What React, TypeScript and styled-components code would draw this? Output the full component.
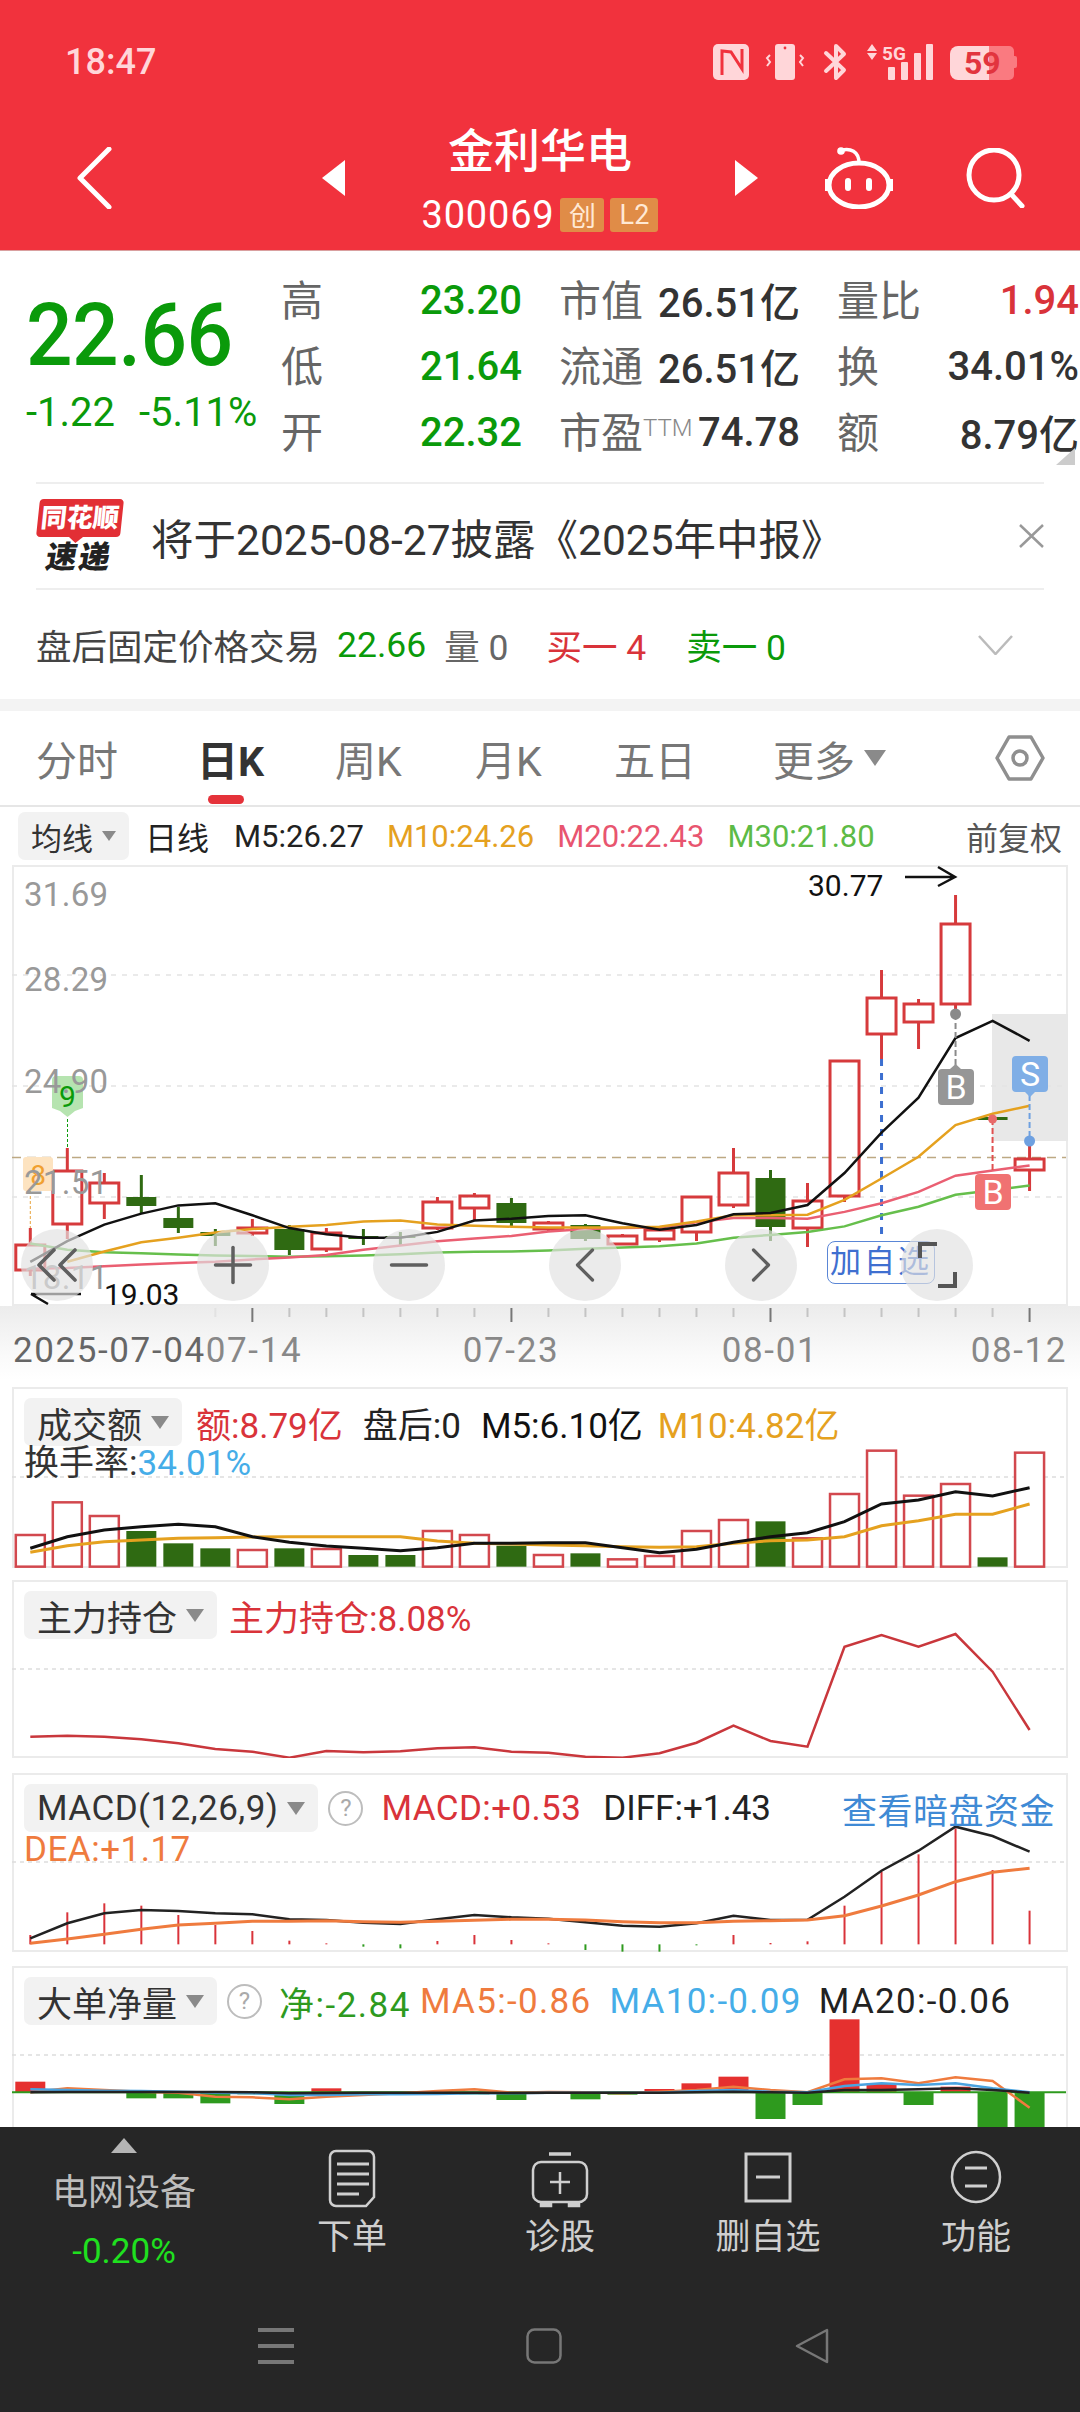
import styled, { createGlobalStyle } from "styled-components";
import { ChevronLeft, ChevronRight, ChevronsLeft, Minus, Plus } from "lucide-react";

const DARK_GREEN = "#2f6a12";

const GlobalStyle = createGlobalStyle`
  html, body {
    margin: 0;
    padding: 0;
    background: #fff;
  }
  body {
    font-family: Roboto, "Noto Sans CJK SC", sans-serif;
    color: #333;
  }
  * {
    box-sizing: border-box;
  }
`;

const Page = styled.div`
  position: relative;
  width: 1080px;
  height: 2412px;
  overflow: hidden;
  background: #fff;
`;

/* ---------- red header ---------- */

const Header = styled.header`
  height: 251px;
  background: #f1323d;
  border-bottom: 1px solid #d9a0a0;
`;

const StatusBar = styled.div`
  height: 106px;
  padding: 44px 63px 0 65px;
  display: flex;
  justify-content: space-between;
  align-items: flex-start;
`;

const Clock = styled.div`
  font-size: 36px;
  line-height: 36px;
  font-weight: 500;
  color: #ffd6d9;
`;

const NavBar = styled.div`
  display: grid;
  grid-template-columns: 246px 23px 390px 23px 1fr;
  padding-left: 76px;
  align-items: center;
  height: 144px;
`;

const Arrow = styled.span<{ $dir: "left" | "right" }>`
  display: block;
  width: 0;
  height: 0;
  border-top: 18px solid transparent;
  border-bottom: 18px solid transparent;
  ${(p) =>
    p.$dir === "left"
      ? "border-right: 23px solid #fff;"
      : "border-left: 23px solid #fff;"}
`;

const TitleBlock = styled.div`
  display: flex;
  flex-direction: column;
  align-items: center;
  color: #fff;
`;

const StockName = styled.div`
  font-size: 46px;
  line-height: 58px;
  font-weight: 500;
`;

const StockCode = styled.div`
  display: flex;
  align-items: center;
  gap: 6px;
  height: 40px;
  margin-top: 15px;
  font-size: 38px;
  letter-spacing: 0.8px;
`;

const Badge = styled.span<{ $width: number }>`
  width: ${(p) => p.$width}px;
  height: 34px;
  display: flex;
  align-items: center;
  justify-content: center;
  background: #e08c47;
  border-radius: 3px;
  font-size: 27px;
  letter-spacing: 0;
  color: #ffe9d5;
`;

const NavIcons = styled.div`
  display: flex;
  justify-content: flex-end;
  align-items: center;
  gap: 71px;
  padding-right: 55px;
`;

/* ---------- quote ---------- */

const QuotePanel = styled.section`
  display: flex;
  height: 231px;
  padding-top: 13px;
  position: relative;
`;

const PriceBlock = styled.div`
  width: 281px;
  padding: 27px 0 0 26px;
`;

const Price = styled.div`
  font-size: 82px;
  line-height: 88px;
  font-weight: 500;
  letter-spacing: -0.5px;
  color: #0a9a0a;
  transform: scaleY(1.06);
`;

const PriceChange = styled.div`
  display: flex;
  gap: 24px;
  margin-top: 14px;
  font-size: 40px;
  line-height: 40px;
  white-space: nowrap;
  color: #0a9a0a;
`;

const StatGrid = styled.div`
  display: grid;
  grid-template-columns: 241px 241px 242px;
  grid-auto-rows: 66px;
  column-gap: 37px;
  width: 799px;
`;

const Stat = styled.div`
  display: flex;
  justify-content: space-between;
  align-items: center;
  font-size: 40px;
  white-space: nowrap;
`;

const StatLabel = styled.span`
  font-size: 42px;
  color: #666;
`;

const Ttm = styled.sup`
  font-size: 24px;
  line-height: 0;
  font-weight: 300;
  color: #888;
  vertical-align: 12px;
`;

const StatValue = styled.span<{ $color?: string }>`
  margin-top: 6px;
  color: ${(p) => p.$color || "#333"};
  font-weight: 500;
`;

const CornerMark = styled.span`
  position: absolute;
  right: 5px;
  bottom: 17px;
  width: 0;
  height: 0;
  border-left: 19px solid transparent;
  border-bottom: 17px solid #ccc;
`;

/* ---------- notice + after-hours ---------- */

const NewsBar = styled.div`
  display: flex;
  align-items: center;
  height: 108px;
  margin: 0 36px;
  border-top: 2px solid #eee;
  border-bottom: 2px solid #eee;
`;

const Logo = styled.div`
  width: 115px;
  display: flex;
  flex-direction: column;
  align-items: flex-start;
`;

const LogoBubble = styled.div`
  position: relative;
  width: 84px;
  height: 38px;
  margin-left: 2px;
  background: #e22f35;
  border-radius: 4px;
  transform: skewX(-6deg);
  color: #fff;
  font-size: 26px;
  font-weight: 900;
  line-height: 38px;
  text-align: center;
  white-space: nowrap;
  &::after {
    content: "";
    position: absolute;
    left: 33px;
    bottom: -6px;
    border-left: 7px solid transparent;
    border-right: 7px solid transparent;
    border-top: 6px solid #e22f35;
  }
`;

const LogoSub = styled.div`
  margin: 5px 0 0 10px;
  font-size: 31px;
  line-height: 32px;
  font-weight: 900;
  letter-spacing: 2px;
  color: #222;
  transform: skewX(-10deg);
`;

const NewsText = styled.div`
  flex: 1;
  font-size: 42.5px;
  color: #333;
  white-space: nowrap;
`;

const AfterHours = styled.div`
  display: flex;
  align-items: center;
  height: 109px;
  padding: 0 67px 0 36px;
  font-size: 35.5px;
  color: #444;
  white-space: nowrap;
`;

const AfterItem = styled.span<{ $color?: string; $gap: number }>`
  margin-left: ${(p) => p.$gap}px;
  color: ${(p) => p.$color || "#666"};
`;

const GapBand = styled.div`
  height: 12px;
  background: #f3f3f3;
`;

/* ---------- tabs ---------- */

const Tabs = styled.nav`
  display: grid;
  grid-template-columns: 161px 138px 140px 139px 159px 222px auto;
  align-items: center;
  height: 96px;
  padding-left: 36px;
  border-bottom: 2px solid #e6e6e6;
`;

const Tab = styled.div<{ $active?: boolean }>`
  position: relative;
  display: flex;
  align-items: center;
  gap: 9px;
  font-size: 41px;
  font-weight: ${(p) => (p.$active ? 700 : 400)};
  color: ${(p) => (p.$active ? "#333" : "#777")};
`;

const TabLine = styled.span`
  position: absolute;
  left: 11px;
  top: 67px;
  width: 36px;
  height: 9px;
  border-radius: 5px;
  background: #e5323a;
`;

const Caret = styled.span<{ $size?: number }>`
  display: inline-block;
  width: 0;
  height: 0;
  border-left: ${(p) => p.$size || 9}px solid transparent;
  border-right: ${(p) => p.$size || 9}px solid transparent;
  border-top: ${(p) => (p.$size || 9) * 1.5}px solid #8a8a8a;
`;

/* ---------- main chart ---------- */

const ChartToolbar = styled.div`
  display: flex;
  align-items: center;
  gap: 23px;
  height: 58px;
  padding: 0 18px;
  font-size: 31px;
  white-space: nowrap;
`;

const Pill = styled.div<{ $size?: number; $spacing?: number }>`
  display: flex;
  align-items: center;
  gap: 9px;
  height: 48px;
  padding: 0 13px;
  background: #f2f2f2;
  border-radius: 7px;
  font-size: ${(p) => p.$size || 35}px;
  letter-spacing: ${(p) => p.$spacing || 0}px;
  color: #333;
  white-space: nowrap;
`;

const ToolbarValue = styled.span<{ $color?: string; $gap?: number; $size?: number }>`
  color: ${(p) => p.$color || "#222"};
  margin-left: ${(p) => p.$gap || 0}px;
  font-size: ${(p) => p.$size || 31}px;
`;

const ToolbarEnd = styled.span`
  margin-left: auto;
  font-size: 32px;
  color: #555;
`;

const ChartFrame = styled.div`
  position: relative;
  height: 441px;
  margin: 0 12px;
  border: 2px solid #ebebeb;
`;

const FrameSvg = styled.svg`
  position: absolute;
  left: -2px;
  top: -2px;
  text {
    font-family: Roboto, "Noto Sans CJK SC", sans-serif;
  }
`;

const FloatTag = styled.div`
  position: absolute;
  left: 813px;
  top: 374px;
  width: 108px;
  height: 43px;
  border: 1.5px solid #5a86d6;
  border-radius: 8px;
  background: #fff;
  color: #3f6fd0;
  font-size: 31px;
  line-height: 40px;
  letter-spacing: 3px;
  text-align: center;
  white-space: nowrap;
`;

const ZoomButtons = styled.div`
  position: absolute;
  left: 7px;
  top: 362px;
  display: flex;
  gap: 104px;
`;

const ZoomButton = styled.div`
  width: 72px;
  height: 72px;
  border-radius: 50%;
  background: rgba(226, 226, 226, 0.68);
  display: flex;
  align-items: center;
  justify-content: center;
  color: #5f5f5f;
`;

const AxisRow = styled.div`
  height: 81px;
  background: linear-gradient(#ececec 0, #fafafa 50px, #fff 74px);
`;

const AxisSvg = styled.svg`
  display: block;
  text {
    font-family: Roboto, sans-serif;
  }
`;

/* ---------- indicator panels ---------- */

const IndicatorPanel = styled.section<{ $height: number; $gap: number; $open?: boolean }>`
  position: relative;
  height: ${(p) => p.$height}px;
  margin: ${(p) => p.$gap}px 12px 0;
  border: 2px solid #ebebeb;
  ${(p) => (p.$open ? "border-bottom: 0;" : "")}
  padding: 9px 10px 0;
`;

const PanelSvg = styled.svg`
  position: absolute;
  left: -2px;
  top: -2px;
`;

const Legend = styled.div`
  position: relative;
  display: flex;
  align-items: center;
  font-size: 35px;
  height: 48px;
  white-space: nowrap;
`;

const LegendLine = styled.div`
  position: relative;
  font-size: 35px;
  line-height: 36px;
  white-space: nowrap;
`;

const LegendItem = styled.span<{ $color?: string; $gap?: number; $spacing?: number }>`
  color: ${(p) => p.$color || "#222"};
  margin-left: ${(p) => p.$gap || 0}px;
  letter-spacing: ${(p) => p.$spacing || 0}px;
`;

const LegendLink = styled.span`
  margin-left: auto;
  margin-right: 1px;
  letter-spacing: 0.5px;
  color: #3f8ad5;
`;

const HelpMark = styled.span`
  width: 35px;
  height: 35px;
  margin-left: 10px;
  border: 2px solid #bdbdbd;
  border-radius: 50%;
  display: flex;
  align-items: center;
  justify-content: center;
  font-size: 24px;
  color: #aaa;
`;

/* ---------- bottom bar ---------- */

const Footer = styled.footer`
  position: absolute;
  left: 0;
  right: 0;
  bottom: 0;
  height: 285px;
  background: #262626;
`;

const FooterTabs = styled.div`
  display: grid;
  grid-template-columns: 248px repeat(4, 208px);
  height: 201px;
`;

const SectorCell = styled.div`
  display: flex;
  flex-direction: column;
  align-items: center;
  padding-top: 11px;
`;

const SectorUp = styled.span`
  width: 0;
  height: 0;
  border-left: 13px solid transparent;
  border-right: 13px solid transparent;
  border-bottom: 15px solid #b5b5b5;
`;

const SectorName = styled.div`
  margin-top: 20px;
  font-size: 36px;
  line-height: 40px;
  color: #bdbdbd;
`;

const SectorPct = styled.div`
  margin-top: 19px;
  font-size: 35px;
  line-height: 40px;
  color: #1fe01f;
`;

const ActionCell = styled.div`
  display: flex;
  flex-direction: column;
  align-items: center;
  padding-top: 21px;
  gap: 10px;
`;

const ActionIcon = styled.svg`
  display: block;
  flex-shrink: 0;
  color: #cfcfcf;
`;

const ActionLabel = styled.div`
  font-size: 35px;
  line-height: 40px;
  color: #cfcfcf;
`;

const SystemKeys = styled.div`
  display: flex;
  align-items: center;
  gap: 232px;
  padding-left: 258px;
`;

/* ---------- chart data ---------- */

const cx = (i: number) => 30.3 + 37.01 * i;
const mainY = (v: number) => 840 + v / 2.904;
const panelY = (base: number) => (v: number) => base + v / 3;

// [type, bodyTop, bodyBottom, wickTop, wickBottom] in page pixels
const candles: ["r" | "g", number, number, number, number][] = [
  ["r", 1245, 1270, 1228, 1276],
  ["r", 1171, 1224, 1148, 1239],
  ["r", 1183, 1203, 1173, 1219],
  ["g", 1197, 1206, 1175, 1214],
  ["g", 1218, 1228, 1207, 1233],
  ["g", 1232, 1236, 1229, 1246],
  ["r", 1228, 1233, 1219, 1236],
  ["g", 1229, 1250, 1225, 1255],
  ["r", 1233, 1249, 1228, 1252],
  ["g", 1236, 1239, 1229, 1245],
  ["g", 1236, 1238, 1232, 1246],
  ["r", 1202, 1228, 1197, 1230],
  ["r", 1196, 1208, 1193, 1221],
  ["g", 1203, 1223, 1198, 1226],
  ["r", 1223, 1229, 1221, 1231],
  ["g", 1225, 1239, 1224, 1241],
  ["r", 1236, 1244, 1234, 1245],
  ["r", 1230, 1239, 1228, 1242],
  ["r", 1197, 1232, 1197, 1241],
  ["r", 1173, 1205, 1148, 1208],
  ["g", 1178, 1227, 1170, 1241],
  ["r", 1201, 1228, 1183, 1247],
  ["r", 1061, 1196, 1061, 1202],
  ["r", 998, 1034, 970, 1059],
  ["r", 1004, 1022, 999, 1049],
  ["r", 924, 1004, 895, 1012],
  ["g", 1117, 1120, 1116, 1121],
  ["r", 1159, 1170, 1141, 1191],
];

const mainBlack = [1225, 1165, 1117, 1085, 1061, 1055, 1090, 1127, 1145, 1155, 1155, 1138, 1105, 1100, 1092, 1090, 1113, 1132, 1118, 1087, 1083, 1060, 967, 850, 748, 575, 525, 583];
const mainOrange = [1225, 1195, 1168, 1155, 1140, 1130, 1123, 1118, 1108, 1105, 1117, 1120, 1123, 1125, 1125, 1125, 1123, 1108, 1090, 1090, 1088, 1045, 983, 920, 828, 795, 772];
const mainPink = [1245, 1243, 1238, 1233, 1228, 1225, 1218, 1212, 1205, 1190, 1178, 1165, 1157, 1150, 1137, 1130, 1127, 1125, 1110, 1098, 1098, 1100, 1080, 1055, 1022, 975, 960, 945];
const mainGreen = [1172, 1190, 1197, 1200, 1204, 1207, 1208, 1210, 1209, 1207, 1203, 1198, 1196, 1195, 1192, 1187, 1183, 1180, 1172, 1155, 1147, 1138, 1122, 1090, 1065, 1030, 1017, 1003];

const volumeBars: ["r" | "g", number][] = [
  ["r", 465], ["r", 367], ["r", 408], ["g", 453], ["g", 490], ["g", 505], ["r", 510],
  ["g", 505], ["r", 507], ["g", 525], ["g", 525], ["r", 453], ["r", 465], ["g", 497],
  ["r", 525], ["g", 520], ["r", 538], ["r", 528], ["r", 453], ["r", 420], ["g", 424],
  ["r", 475], ["r", 342], ["r", 212], ["r", 347], ["r", 312], ["g", 532], ["r", 218],
];
const volumeBlack = [505, 470, 450, 440, 433, 440, 470, 487, 498, 505, 512, 503, 490, 490, 488, 488, 503, 518, 508, 487, 470, 458, 425, 372, 360, 335, 348, 323];
const volumeOrange = [517, 497, 485, 480, 475, 473, 471, 470, 470, 470, 470, 483, 490, 492, 495, 497, 500, 502, 500, 490, 482, 480, 470, 437, 422, 403, 403, 372];

const holdingLine = [1070, 1067, 1070, 1078, 1090, 1107, 1115, 1133, 1113, 1117, 1114, 1105, 1102, 1115, 1118, 1130, 1133, 1120, 1088, 1037, 1083, 1100, 800, 765, 800, 762, 875, 1050];

// bar end, measured from the zero line at 553
const macdBars = [525, 457, 430, 437, 465, 495, 513, 542, 550, 560, 565, 543, 525, 540, 550, 570, 575, 575, 556, 525, 549, 544, 437, 335, 283, 205, 330, 452];
const macdBlack = [535, 490, 460, 450, 453, 460, 463, 478, 480, 488, 492, 478, 465, 472, 476, 487, 497, 500, 490, 467, 480, 479, 410, 332, 272, 200, 228, 275];
const macdOrange = [550, 537, 523, 508, 495, 490, 484, 484, 482, 485, 487, 484, 481, 478, 478, 480, 485, 488, 488, 484, 482, 480, 467, 438, 405, 365, 337, 325];

// end of each bar against the zero line at 997
const orderBars = [965, 990, 994, 1015, 1015, 1030, 1003, 1032, 985, 1002, 1000, 994, 1003, 1020, 1000, 1018, 1004, 987, 970, 950, 1077, 1035, 778, 970, 1035, 980, 1110, 1110];
const orderOrange = [997, 985, 990, 995, 998, 1010, 1012, 1018, 1010, 1005, 1000, 993, 988, 998, 996, 997, 1000, 995, 990, 980, 990, 997, 958, 955, 970, 952, 963, 1043];
const orderBlue = [988, 990, 992, 993, 995, 998, 1000, 1005, 1005, 1003, 1003, 1002, 1000, 1000, 998, 998, 998, 998, 993, 990, 995, 997, 978, 970, 975, 970, 985, 997];
const orderBlack = [997, 996, 996, 996, 996, 996, 997, 1000, 999, 998, 998, 998, 998, 999, 998, 998, 998, 998, 997, 995, 997, 998, 990, 990, 988, 985, 990, 998];

const linePoints = (values: number[], toY: (v: number) => number, start = 0) =>
  values.map((v, i) => `${cx(i + start).toFixed(1)},${toY(v).toFixed(1)}`).join(" ");

/* ---------- drawings ---------- */

const StatusIcons = () => (
  <svg width="304" height="38" viewBox="714 44 304 38">
    <g fill="#ffd6d9">
      <rect x="714" y="44" width="36" height="36" rx="5" />
      <path d="M723 75V51l9 1 11 17V49" fill="none" stroke="#f1323d" strokeWidth="3" />
      <rect x="776" y="44" width="20" height="36" rx="3" />
      <circle cx="786" cy="48" r="1.4" fill="#f1323d" />
      <path d="M771 55l-3 3 3 4-3 4" fill="none" stroke="#ffd6d9" strokeWidth="2" />
      <path d="M801 55l3 3-3 4 3 4" fill="none" stroke="#ffd6d9" strokeWidth="2" />
      <path d="M827 53l18 17-8 8V46l8 8-18 17" fill="none" stroke="#ffd6d9" strokeWidth="4" strokeLinejoin="round" strokeLinecap="round" />
      <path d="M873 44l5 7h-10zM873 60l5-7h-10z" />
      <text x="883" y="60" fontSize="19" fontWeight="700" fontFamily="Roboto, sans-serif">5G</text>
      <rect x="889" y="67" width="7" height="13" rx="1" />
      <rect x="902" y="62" width="7" height="18" rx="1" />
      <rect x="915" y="53" width="7" height="27" rx="1" />
      <rect x="927" y="44" width="7" height="36" rx="1" />
      <path d="M990 46h20a5 5 0 0 1 5 5v24a5 5 0 0 1-5 5h-20z" fill="#fa7a80" />
      <path d="M1015 56h1a2 2 0 0 1 2 2v8a2 2 0 0 1-2 2h-1z" fill="#fa7a80" />
      <path d="M990 46h-31a8 8 0 0 0-8 8v18a8 8 0 0 0 8 8h31z" />
      <text x="965" y="74" fontSize="32" fontWeight="700" fill="#e2343e" fontFamily="Roboto, sans-serif">59</text>
    </g>
  </svg>
);

const BackChevron = () => (
  <svg width="36" height="62" viewBox="0 0 36 62">
    <path d="M33 2L4 31l29 29" fill="none" stroke="#fff" strokeWidth="5" strokeLinecap="round" strokeLinejoin="round" />
  </svg>
);

const RobotIcon = () => (
  <svg width="70" height="62" viewBox="0 0 70 62" fill="none" stroke="#fff" strokeWidth="5">
    <ellipse cx="35" cy="38" rx="30" ry="22" />
    <path d="M18 3c8-2 17 1 17 13" strokeWidth="3.5" />
    <circle cx="17" cy="4" r="3.8" fill="#fff" stroke="none" />
    <path d="M3 32v12M67 32v12" strokeWidth="4" />
    <rect x="21" y="31" width="6" height="13" rx="3" fill="#fff" stroke="none" />
    <rect x="42" y="31" width="6" height="13" rx="3" fill="#fff" stroke="none" />
  </svg>
);

const SearchIcon = () => (
  <svg width="60" height="60" viewBox="0 0 60 60" fill="none" stroke="#fff" strokeWidth="5">
    <circle cx="29" cy="27" r="25" />
    <path d="M46 46l11 12" strokeLinecap="round" />
  </svg>
);

const HexIcon = () => (
  <svg width="50" height="46" viewBox="0 0 50 46" fill="none" stroke="#8f8f8f" strokeWidth="3.5">
    <path d="M14 2h22l12 21-12 21H14L2 23z" strokeLinejoin="round" />
    <circle cx="25" cy="23" r="7" />
  </svg>
);

const FullscreenIcon = () => (
  <svg width="72" height="72" viewBox="0 0 72 72" fill="none" stroke="#555" strokeWidth="4">
    <path d="M19 29V15h17M54 43v14H37" />
  </svg>
);

const MainChart = () => (
  <FrameSvg width="1056" height="441" viewBox="12 865 1056 441">
    <rect x="992" y="1014" width="76" height="127" fill="#e8e8e8" />
    {[975, 1086, 1197].map((y) => (
      <line key={y} x1="12" x2="1066" y1={y} y2={y} stroke="#e4e4e4" strokeWidth="1.5" strokeDasharray="5 6" />
    ))}
    <line x1="12" x2="1066" y1="1157.5" y2="1157.5" stroke="#bda983" strokeWidth="1.5" strokeDasharray="9 6" />

    {/* dotted marker stems */}
    <line x1="67.5" x2="67.5" y1="1119" y2="1148" stroke="#0a9a0a" strokeWidth="1" strokeDasharray="3 2" />
    <line x1="30.3" x2="30.3" y1="1191" y2="1230" stroke="#e8a33d" strokeWidth="1" strokeDasharray="3 2" />
    <line x1={cx(23)} x2={cx(23)} y1="1059" y2="1242" stroke="#3c6fd0" strokeWidth="3" strokeDasharray="7 7" />

    {candles.map(([kind, top, bottom, wickTop, wickBottom], i) =>
      kind === "r" ? (
        <g key={i} stroke="#d63a3c" strokeWidth="3" fill="none">
          <line x1={cx(i)} x2={cx(i)} y1={wickTop} y2={top} />
          <line x1={cx(i)} x2={cx(i)} y1={bottom} y2={wickBottom} />
          <rect x={cx(i) - 14.5} y={top} width="29" height={bottom - top} />
        </g>
      ) : (
        <g key={i} fill={DARK_GREEN}>
          <rect x={cx(i) - 1.5} y={wickTop} width="3" height={wickBottom - wickTop} />
          <rect x={cx(i) - 15} y={top} width="30" height={bottom - top} />
        </g>
      )
    )}

    <polyline points={linePoints(mainGreen, mainY)} fill="none" stroke="#66bf4c" strokeWidth="2.5" />
    <polyline points={linePoints(mainPink, mainY)} fill="none" stroke="#ea5f72" strokeWidth="2.5" />
    <polyline points={linePoints(mainOrange, mainY, 1)} fill="none" stroke="#e5a11f" strokeWidth="2.5" />
    <polyline points={linePoints(mainBlack, mainY)} fill="none" stroke="#111" strokeWidth="2.5" />

    {/* trade markers */}
    <path d="M52 1080a4 4 0 0 1 4-4h23a4 4 0 0 1 4 4v28l-8 3-7.5 6-7.5-6-8-3z" fill="#b6e4b0" />
    <text x="67.5" y="1107" fontSize="30" textAnchor="middle" fill="#0a9a0a">9</text>
    <rect x="23" y="1157" width="30" height="34" rx="3" fill="#fde3c0" />
    <text x="38" y="1185" fontSize="28" textAnchor="middle" fill="#f0a030">8</text>

    <line x1={cx(25)} x2={cx(25)} y1="1014" y2="1066" stroke="#8a8a8a" strokeWidth="2" strokeDasharray="6 3" />
    <circle cx={cx(25)} cy="1014" r="5.5" fill="#8a8a8a" />
    <path d="M938 1073a4 4 0 0 1 4-4h8l5.6-5 5.4 5h9a4 4 0 0 1 4 4v28a4 4 0 0 1-4 4h-28a4 4 0 0 1-4-4z" fill="#969696" />
    <text x="956" y="1099" fontSize="34" textAnchor="middle" fill="#fff">B</text>

    <line x1={cx(26)} x2={cx(26)} y1="1119" y2="1172" stroke="#e05050" strokeWidth="2" strokeDasharray="6 3" />
    <circle cx={cx(26)} cy="1119" r="4.5" fill="#e86a6a" />
    <path d="M975 1178a4 4 0 0 1 4-4h28a4 4 0 0 1 4 4v28a4 4 0 0 1-4 4h-28a4 4 0 0 1-4-4z" fill="#f07272" />
    <text x="993" y="1204" fontSize="34" textAnchor="middle" fill="#fff">B</text>

    <line x1={cx(27)} x2={cx(27)} y1="1095" y2="1140" stroke="#6ea0e0" strokeWidth="2" strokeDasharray="6 3" />
    <circle cx={cx(27)} cy="1141" r="5.5" fill="#6ea0e0" />
    <path d="M1012 1060a4 4 0 0 1 4-4h28a4 4 0 0 1 4 4v28a4 4 0 0 1-4 4h-9l-5 5-5-5h-9a4 4 0 0 1-4-4z" fill="#7faee6" />
    <text x="1030" y="1086" fontSize="34" textAnchor="middle" fill="#fff">S</text>

    {[
      ["31.69", 906],
      ["28.29", 991],
      ["24.90", 1093],
      ["21.51", 1194],
      ["18.11", 1289],
    ].map(([label, y]) => (
      <text key={label} x="24" y={y} fontSize="33" letterSpacing="0.3" fill="#999">
        {label}
      </text>
    ))}

    <text x="808" y="896" fontSize="30" fill="#111">30.77</text>
    <path d="M905 877h50M938 867l17 10-17 9" fill="none" stroke="#111" strokeWidth="2.5" />
    <text x="104" y="1305" fontSize="30" fill="#111">19.03</text>
    <path d="M81 1294H31M48 1304l-17-10" fill="none" stroke="#111" strokeWidth="2.5" />
  </FrameSvg>
);

const majorTicks = [6, 13, 20, 27];

const DateAxis = () => (
  <AxisSvg width="1080" height="81" viewBox="0 1306 1080 81">
    {candles.map((_, i) =>
      i < 5 ? null : (
        <line
          key={i}
          x1={cx(i)}
          x2={cx(i)}
          y1="1308"
          y2={majorTicks.includes(i) ? 1322 : 1317}
          stroke={majorTicks.includes(i) ? "#777" : i === 5 ? "#e2e2e2" : "#c4c4c4"}
          strokeWidth="2"
        />
      )
    )}
    <text x="13" y="1362" fontSize="35" letterSpacing="1.6" fill="#666">2025-07-04</text>
    <text x="254" y="1362" fontSize="35" letterSpacing="1.6" textAnchor="middle" fill="#888">07-14</text>
    <text x="511" y="1362" fontSize="35" letterSpacing="1.6" textAnchor="middle" fill="#888">07-23</text>
    <text x="770" y="1362" fontSize="35" letterSpacing="1.6" textAnchor="middle" fill="#888">08-01</text>
    <text x="1067" y="1362" fontSize="35" letterSpacing="1.6" textAnchor="end" fill="#888">08-12</text>
  </AxisSvg>
);

const VolumeChart = () => {
  const y = panelY(1380);
  return (
    <PanelSvg width="1056" height="181" viewBox="12 1387 1056 181">
      <line x1="12" x2="1066" y1="1477" y2="1477" stroke="#ddd" strokeWidth="1.5" strokeDasharray="4 4" />
      {volumeBars.map(([kind, top], i) =>
        kind === "r" ? (
          <rect key={i} x={cx(i) - 14.5} y={y(top)} width="29" height={y(560) - y(top)} fill="#fff" stroke="#d2484e" strokeWidth="2.5" />
        ) : (
          <rect key={i} x={cx(i) - 15} y={y(top)} width="30" height={y(560) - y(top)} fill={DARK_GREEN} />
        )
      )}
      <polyline points={linePoints(volumeOrange, y)} fill="none" stroke="#e5a11f" strokeWidth="3" />
      <polyline points={linePoints(volumeBlack, y)} fill="none" stroke="#111" strokeWidth="3" />
    </PanelSvg>
  );
};

const HoldingChart = () => {
  const y = panelY(1380);
  return (
    <PanelSvg width="1056" height="178" viewBox="12 1580 1056 178">
      <line x1="12" x2="1066" y1="1669" y2="1669" stroke="#ddd" strokeWidth="1.5" strokeDasharray="4 4" />
      <polyline points={linePoints(holdingLine, y)} fill="none" stroke="#c9373c" strokeWidth="2.5" />
    </PanelSvg>
  );
};

const MacdChart = () => {
  const y = panelY(1760);
  return (
    <PanelSvg width="1056" height="179" viewBox="12 1773 1056 179">
      <line x1="12" x2="1066" y1="1862" y2="1862" stroke="#ddd" strokeWidth="1.5" strokeDasharray="4 4" />
      {macdBars.map((v, i) => (
        <line
          key={i}
          x1={cx(i)}
          x2={cx(i)}
          y1={y(553)}
          y2={y(v)}
          stroke={v > 553 ? "#2e9a1e" : "#d9333a"}
          strokeWidth="2"
        />
      ))}
      <polyline points={linePoints(macdBlack, y)} fill="none" stroke="#222" strokeWidth="2.5" />
      <polyline points={linePoints(macdOrange, y)} fill="none" stroke="#ef7b3e" strokeWidth="3" />
    </PanelSvg>
  );
};

const OrderChart = () => {
  const y = panelY(1760);
  return (
    <PanelSvg width="1056" height="161" viewBox="12 1966 1056 161">
      <line x1="12" x2="1066" y1="2055" y2="2055" stroke="#ddd" strokeWidth="1.5" strokeDasharray="4 4" />
      {orderBars.map((v, i) => (
        <rect
          key={i}
          x={cx(i) - 15}
          y={Math.min(y(v), y(997))}
          width="30"
          height={Math.abs(y(v) - y(997))}
          fill={v > 997 ? "#2e9a1e" : "#e5302f"}
        />
      ))}
      <line x1="12" x2="1066" y1={y(997)} y2={y(997)} stroke="#2e9a1e" strokeWidth="2" />
      <polyline points={linePoints(orderOrange, y)} fill="none" stroke="#ef7b3e" strokeWidth="2.5" />
      <polyline points={linePoints(orderBlue, y)} fill="none" stroke="#4aa3e0" strokeWidth="2.5" />
      <polyline points={linePoints(orderBlack, y)} fill="none" stroke="#222" strokeWidth="2.5" />
    </PanelSvg>
  );
};

export default function App() {
  return (
    <Page>
      <GlobalStyle />
      <Header>
        <StatusBar>
          <Clock>18:47</Clock>
          <StatusIcons />
        </StatusBar>
        <NavBar>
          <BackChevron />
          <Arrow $dir="left" />
          <TitleBlock>
            <StockName>金利华电</StockName>
            <StockCode>
              300069
              <Badge $width={44}>创</Badge>
              <Badge $width={48}>L2</Badge>
            </StockCode>
          </TitleBlock>
          <Arrow $dir="right" />
          <NavIcons>
            <RobotIcon />
            <SearchIcon />
          </NavIcons>
        </NavBar>
      </Header>

      <QuotePanel>
        <PriceBlock>
          <Price>22.66</Price>
          <PriceChange>
            <span>-1.22</span>
            <span>-5.11%</span>
          </PriceChange>
        </PriceBlock>
        <StatGrid>
          <Stat><StatLabel>高</StatLabel><StatValue $color="#0a9a0a">23.20</StatValue></Stat>
          <Stat><StatLabel>市值</StatLabel><StatValue>26.51亿</StatValue></Stat>
          <Stat><StatLabel>量比</StatLabel><StatValue $color="#d9333a">1.94</StatValue></Stat>
          <Stat><StatLabel>低</StatLabel><StatValue $color="#0a9a0a">21.64</StatValue></Stat>
          <Stat><StatLabel>流通</StatLabel><StatValue>26.51亿</StatValue></Stat>
          <Stat><StatLabel>换</StatLabel><StatValue>34.01%</StatValue></Stat>
          <Stat><StatLabel>开</StatLabel><StatValue $color="#0a9a0a">22.32</StatValue></Stat>
          <Stat><StatLabel>市盈<Ttm>TTM</Ttm></StatLabel><StatValue>74.78</StatValue></Stat>
          <Stat><StatLabel>额</StatLabel><StatValue>8.79亿</StatValue></Stat>
        </StatGrid>
        <CornerMark />
      </QuotePanel>

      <NewsBar>
        <Logo>
          <LogoBubble>同花顺</LogoBubble>
          <LogoSub>速递</LogoSub>
        </Logo>
        <NewsText>将于2025-08-27披露《2025年中报》</NewsText>
        <svg width="25" height="24" viewBox="0 0 25 24" stroke="#999" strokeWidth="2.5">
          <path d="M1 1l23 22M24 1L1 23" />
        </svg>
      </NewsBar>

      <AfterHours>
        <span>盘后固定价格交易</span>
        <AfterItem $color="#0a9a0a" $gap={17}>22.66</AfterItem>
        <AfterItem $gap={18}>量 0</AfterItem>
        <AfterItem $color="#d9333a" $gap={38}>买一 4</AfterItem>
        <AfterItem $color="#0a9a0a" $gap={40}>卖一 0</AfterItem>
        <svg style={{ marginLeft: "auto" }} width="35" height="20" viewBox="0 0 35 20" fill="none" stroke="#bbb" strokeWidth="2.5">
          <path d="M1 1l16.500 18L34 1" />
        </svg>
      </AfterHours>

      <GapBand />

      <Tabs>
        <Tab>分时</Tab>
        <Tab $active>
          日K
          <TabLine />
        </Tab>
        <Tab>周K</Tab>
        <Tab>月K</Tab>
        <Tab>五日</Tab>
        <Tab>
          更多
          <Caret $size={11} />
        </Tab>
        <HexIcon />
      </Tabs>

      <ChartToolbar>
        <Pill $size={31}>
          均线
          <Caret $size={7} />
        </Pill>
        <ToolbarValue $gap={-7} $size={32}>日线</ToolbarValue>
        <ToolbarValue $gap={2}>M5:26.27</ToolbarValue>
        <ToolbarValue $color="#e5a11f">M10:24.26</ToolbarValue>
        <ToolbarValue $color="#e8556f">M20:22.43</ToolbarValue>
        <ToolbarValue $color="#5dbb46">M30:21.80</ToolbarValue>
        <ToolbarEnd>前复权</ToolbarEnd>
      </ChartToolbar>

      <ChartFrame>
        <MainChart />
        <FloatTag>加自选</FloatTag>
        <ZoomButtons>
          <ZoomButton><ChevronsLeft size={72} strokeWidth={1.2} /></ZoomButton>
          <ZoomButton><Plus size={60} strokeWidth={1.4} /></ZoomButton>
          <ZoomButton><Minus size={60} strokeWidth={1.4} /></ZoomButton>
          <ZoomButton><ChevronLeft size={60} strokeWidth={1.3} /></ZoomButton>
          <ZoomButton><ChevronRight size={60} strokeWidth={1.3} /></ZoomButton>
          <ZoomButton><FullscreenIcon /></ZoomButton>
        </ZoomButtons>
      </ChartFrame>

      <AxisRow>
        <DateAxis />
      </AxisRow>

      <IndicatorPanel $height={181} $gap={0}>
        <VolumeChart />
        <Legend>
          <Pill>
            成交额
            <Caret />
          </Pill>
          <LegendItem $color="#d9333a" $gap={14}>额:8.79亿</LegendItem>
          <LegendItem $gap={20}>盘后:0</LegendItem>
          <LegendItem $color="#111" $gap={20}>M5:6.10亿</LegendItem>
          <LegendItem $color="#e5a11f" $gap={15}>M10:4.82亿</LegendItem>
        </Legend>
        <LegendLine>
          换手率:<LegendItem $color="#45ade8">34.01%</LegendItem>
        </LegendLine>
      </IndicatorPanel>

      <IndicatorPanel $height={178} $gap={12}>
        <HoldingChart />
        <Legend>
          <Pill>
            主力持仓
            <Caret />
          </Pill>
          <LegendItem $color="#d9333a" $gap={12}>主力持仓:8.08%</LegendItem>
        </Legend>
      </IndicatorPanel>

      <IndicatorPanel $height={179} $gap={15}>
        <MacdChart />
        <Legend>
          <Pill $spacing={0.45}>
            MACD(12,26,9)
            <Caret />
          </Pill>
          <HelpMark>?</HelpMark>
          <LegendItem $color="#d9333a" $gap={18} $spacing={0.4}>MACD:+0.53</LegendItem>
          <LegendItem $gap={22}>DIFF:+1.43</LegendItem>
          <LegendLink>查看暗盘资金</LegendLink>
        </Legend>
        <LegendLine>
          <LegendItem $color="#ef7b3e" $spacing={0.5}>DEA:+1.17</LegendItem>
        </LegendLine>
      </IndicatorPanel>

      <IndicatorPanel $height={161} $gap={14} $open>
        <OrderChart />
        <Legend>
          <Pill>
            大单净量
            <Caret />
          </Pill>
          <HelpMark>?</HelpMark>
          <LegendItem $color="#2e9a1e" $gap={17} $spacing={1.5}>净:-2.84</LegendItem>
          <LegendItem $color="#ef7b3e" $gap={9} $spacing={1.3}>MA5:-0.86</LegendItem>
          <LegendItem $color="#45ade8" $gap={18} $spacing={1.3}>MA10:-0.09</LegendItem>
          <LegendItem $gap={17} $spacing={1.3}>MA20:-0.06</LegendItem>
        </Legend>
      </IndicatorPanel>

      <Footer>
        <FooterTabs>
          <SectorCell>
            <SectorUp />
            <SectorName>电网设备</SectorName>
            <SectorPct>-0.20%</SectorPct>
          </SectorCell>
          <ActionCell>
            <ActionIcon width="48" height="60" viewBox="0 0 48 60" fill="none" stroke="currentColor" strokeWidth="2.5">
              <path d="M8 3h32a6 6 0 0 1 6 6v40l-8 9H8a6 6 0 0 1-6-6V9a6 6 0 0 1 6-6z" />
              <path d="M9 16h32M9 26h32M9 36h32M9 46h22" strokeWidth="3" />
            </ActionIcon>
            <ActionLabel>下单</ActionLabel>
          </ActionCell>
          <ActionCell>
            <ActionIcon width="58" height="60" viewBox="0 0 58 60" fill="none" stroke="currentColor" strokeWidth="2.5">
              <path d="M18 6h22" strokeWidth="3.5" />
              <rect x="2" y="14" width="54" height="40" rx="8" />
              <path d="M29 24v22M19 34h20" />
              <path d="M10 55h10v3H10zM38 55h10v3H38z" fill="currentColor" />
            </ActionIcon>
            <ActionLabel>诊股</ActionLabel>
          </ActionCell>
          <ActionCell>
            <ActionIcon width="48" height="60" viewBox="0 0 48 60" fill="none" stroke="currentColor" strokeWidth="3">
              <rect x="2" y="6" width="44" height="47" />
              <path d="M12 29h24" />
            </ActionIcon>
            <ActionLabel>删自选</ActionLabel>
          </ActionCell>
          <ActionCell>
            <ActionIcon width="52" height="60" viewBox="0 0 52 60" fill="none" stroke="currentColor" strokeWidth="2.5">
              <ellipse cx="26" cy="29" rx="24" ry="25" />
              <path d="M15 20h22M15 38h22" strokeWidth="3" />
            </ActionIcon>
            <ActionLabel>功能</ActionLabel>
          </ActionCell>
        </FooterTabs>
        <SystemKeys>
          <svg width="36" height="36" viewBox="0 0 36 36" fill="#777">
            <rect y="0" width="36" height="4" />
            <rect y="16" width="36" height="4" />
            <rect y="32" width="36" height="4" />
          </svg>
          <svg width="36" height="36" viewBox="0 0 36 36" fill="none" stroke="#777" strokeWidth="2.5">
            <rect x="1.500" y="1.500" width="33" height="33" rx="7" />
          </svg>
          <svg width="36" height="36" viewBox="0 0 36 36" fill="none" stroke="#777" strokeWidth="2.5">
            <path d="M33 2v32L3 18z" strokeLinejoin="round" />
          </svg>
        </SystemKeys>
      </Footer>
    </Page>
  );
}
